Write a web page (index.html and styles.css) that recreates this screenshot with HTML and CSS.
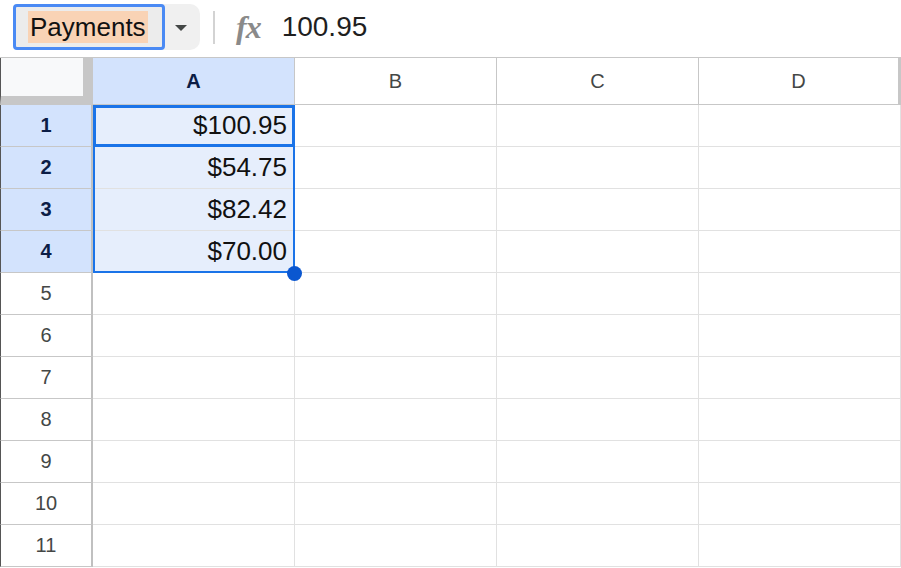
FILE: index.html
```html
<!DOCTYPE html>
<html lang="en">
<head>
    <meta charset="UTF-8">
    <meta name="viewport" content="width=device-width, initial-scale=1.0">
    <title>Payments</title>
    <link rel="stylesheet" href="styles.css">
</head>
<body>
    <div class="toolbar">
        <div class="namebox">
            <div class="name-input"><span class="name-hl">Payments</span></div>
            <div class="name-drop">
                <svg width="14" height="8" viewBox="0 0 14 8"><path d="M1 1h12L7 7z" fill="#444746"/></svg>
            </div>
        </div>
        <div class="sep"></div>
        <span class="fx">fx</span>
        <span class="formula">100.95</span>
    </div>

    <div class="sheet">
        <div class="corner"></div>
        <div class="col-head active">A</div>
        <div class="col-head">B</div>
        <div class="col-head">C</div>
        <div class="col-head">D</div>

        <div class="row-head active">1</div>
        <div class="cell sel">$100.95</div><div class="cell"></div><div class="cell"></div><div class="cell"></div>
        <div class="row-head active">2</div>
        <div class="cell sel">$54.75</div><div class="cell"></div><div class="cell"></div><div class="cell"></div>
        <div class="row-head active">3</div>
        <div class="cell sel">$82.42</div><div class="cell"></div><div class="cell"></div><div class="cell"></div>
        <div class="row-head active">4</div>
        <div class="cell sel">$70.00</div><div class="cell"></div><div class="cell"></div><div class="cell"></div>
        <div class="row-head">5</div>
        <div class="cell"></div><div class="cell"></div><div class="cell"></div><div class="cell"></div>
        <div class="row-head">6</div>
        <div class="cell"></div><div class="cell"></div><div class="cell"></div><div class="cell"></div>
        <div class="row-head">7</div>
        <div class="cell"></div><div class="cell"></div><div class="cell"></div><div class="cell"></div>
        <div class="row-head">8</div>
        <div class="cell"></div><div class="cell"></div><div class="cell"></div><div class="cell"></div>
        <div class="row-head">9</div>
        <div class="cell"></div><div class="cell"></div><div class="cell"></div><div class="cell"></div>
        <div class="row-head">10</div>
        <div class="cell"></div><div class="cell"></div><div class="cell"></div><div class="cell"></div>
        <div class="row-head">11</div>
        <div class="cell"></div><div class="cell"></div><div class="cell"></div><div class="cell"></div>

        <div class="range"></div>
        <div class="active-cell"></div>
        <div class="fill-handle"></div>
    </div>
</body>
</html>
```

FILE: styles.css
```css
body {
    font-family: "Liberation Sans", Arial, sans-serif;
    margin: 0;
    padding: 0;
    background-color: #fff;
    width: 901px;
    height: 568px;
    overflow: hidden;
}
.toolbar {
    height: 58px;
    box-sizing: border-box;
    padding-bottom: 3px;
    border-bottom: 1px solid #c7c7c7;
    display: flex;
    align-items: center;
}
.namebox {
    margin-left: 13px;
    width: 187px;
    height: 46px;
    display: flex;
    align-items: center;
    background: #f0f0f0;
    border-radius: 10px;
}
.name-input {
    width: 152px;
    height: 46px;
    box-sizing: border-box;
    border: 3px solid #4a8af4;
    border-radius: 4px;
    background: #ececec;
    display: flex;
    align-items: center;
    padding-left: 12px;
}
.name-hl {
    background: #f9d3b5;
    color: #111;
    font-size: 26px;
    line-height: 32px;
    padding: 0 2px;
}
.name-drop {
    flex: 1;
    display: flex;
    justify-content: center;
    padding-top: 2px;
    padding-right: 4px;
}
.sep {
    width: 2px;
    height: 33px;
    background: #d3d3d3;
    margin-left: 13px;
}
.fx {
    margin-left: 21px;
    font-family: "Liberation Serif", "Times New Roman", serif;
    font-style: italic;
    font-weight: bold;
    font-size: 32px;
    color: #8a8a8a;
    letter-spacing: -1px;
}
.formula {
    margin-left: 21px;
    font-size: 28px;
    color: #1f1f1f;
}
.sheet {
    position: relative;
    display: grid;
    grid-template-columns: 93px repeat(4, 202px);
    grid-template-rows: 47px repeat(11, 42px);
}
.sheet > div {
    box-sizing: border-box;
}
.corner {
    background: #f8f9fa;
    border-right: 10px solid #c7c7c7;
    border-bottom: 9px solid #c7c7c7;
    border-left: 1px solid #555;
}
.col-head {
    display: flex;
    align-items: center;
    justify-content: center;
    font-size: 20px;
    color: #444746;
    border-right: 1px solid #c7c7c7;
    border-bottom: 1px solid #c7c7c7;
}
.col-head:nth-child(5) {
    border-right: 3px solid #c7c7c7;
}
.col-head.active {
    background: #d3e3fd;
    color: #0b1d46;
    font-weight: bold;
}
.row-head {
    display: flex;
    align-items: center;
    justify-content: center;
    font-size: 20px;
    color: #444746;
    border-left: 1px solid #555;
    border-right: 2px solid #c0c0c0;
    border-bottom: 1px solid #c7c7c7;
}
.row-head.active {
    background: #d3e3fd;
    color: #0b1d46;
    font-weight: bold;
}
.cell {
    display: flex;
    align-items: center;
    justify-content: flex-end;
    padding-right: 7px;
    font-size: 26px;
    color: #111;
    border-right: 1px solid #e1e1e1;
    border-bottom: 1px solid #e1e1e1;
}
.cell.sel {
    background: #e6eefc;
}
.range {
    position: absolute;
    left: 93px;
    top: 47px;
    width: 202px;
    height: 168px;
    border: 2px solid #1a73e8;
}
.active-cell {
    position: absolute;
    left: 93px;
    top: 47px;
    width: 202px;
    height: 42px;
    border: 3px solid #1a73e8;
}
.fill-handle {
    position: absolute;
    left: 287px;
    top: 208px;
    width: 15px;
    height: 15px;
    border-radius: 50%;
    background: #0b57d0;
}
```
